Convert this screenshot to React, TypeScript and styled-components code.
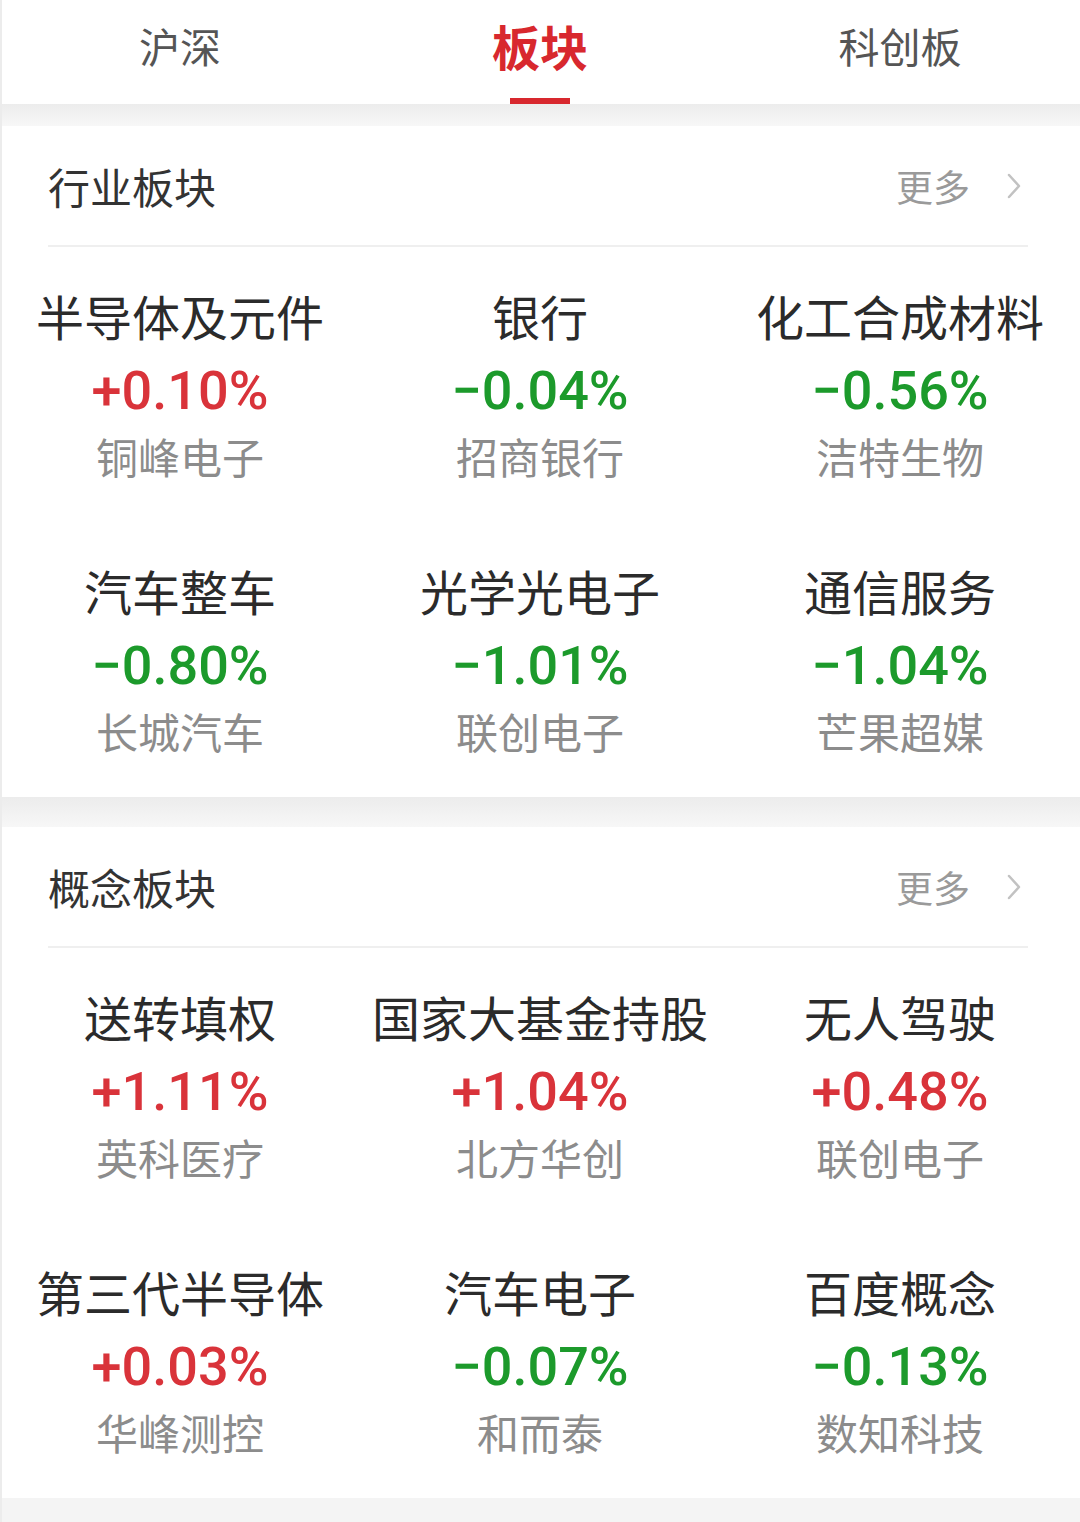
import styled, { createGlobalStyle } from 'styled-components';

const GlobalStyle = createGlobalStyle`
  body {
    margin: 0;
    background: #ffffff;
    font-family: 'Noto Sans CJK SC', 'Noto Sans', sans-serif;
  }
`;

const Page = styled.div`
  position: relative;
  width: 1080px;
  min-height: 1522px;
  background: #f4f4f4;
  &::before {
    content: '';
    position: absolute;
    left: 0;
    top: 0;
    bottom: 0;
    width: 2px;
    background: #ececec;
  }
`;

const TabBar = styled.div`
  display: grid;
  grid-template-columns: repeat(3, 1fr);
  height: 104px;
  background: #fff;
`;

const Tab = styled.div<{ $active?: boolean }>`
  display: flex;
  flex-direction: column;
  align-items: center;
  justify-content: flex-end;
  color: ${(p) => (p.$active ? '#d8282e' : '#555')};
  font-size: ${(p) => (p.$active ? '48px' : '41px')};
  font-weight: ${(p) => (p.$active ? 700 : 400)};
`;

const TabLabel = styled.span`
  line-height: 56px;
  margin-bottom: 25px;
`;

const Indicator = styled.div<{ $show?: boolean }>`
  width: 60px;
  height: 6px;
  background: ${(p) => (p.$show ? '#d8282e' : 'transparent')};
`;

const Band = styled.div<{ $h: number }>`
  height: ${(p) => p.$h}px;
  background: linear-gradient(#ececec, #f7f7f7);
`;

const Section = styled.section`
  background: #fff;
`;

const Header = styled.div`
  display: flex;
  align-items: center;
  justify-content: space-between;
  height: 119px;
  margin: 0 52px 0 48px;
  border-bottom: 2px solid #efefef;
`;

const HeaderTitle = styled.h2`
  margin: 0;
  font-size: 42px;
  font-weight: 400;
  color: #333;
`;

const More = styled.div`
  display: flex;
  align-items: center;
  gap: 36px;
  margin-right: 6px;
  font-size: 37px;
  color: #9a9a9a;
`;

const Grid = styled.div`
  display: grid;
  grid-template-columns: repeat(3, 360px);
  grid-auto-rows: 275px;
`;

const Cell = styled.div`
  display: flex;
  flex-direction: column;
  align-items: center;
  padding-top: 40px;
  white-space: nowrap;
`;

const Name = styled.div`
  font-size: 48px;
  line-height: 56px;
  color: #2b2b2b;
`;

const Pct = styled.div<{ $up: boolean }>`
  margin-top: 13px;
  font-family: Roboto, 'Liberation Sans', sans-serif;
  font-size: 54px;
  font-weight: 500;
  line-height: 70px;
  color: ${(p) => (p.$up ? '#d9333a' : '#1c9a2b')};
`;

const Stock = styled.div`
  margin-top: -2px;
  font-size: 42px;
  line-height: 64px;
  color: #8c8c8c;
`;

const Chevron = () => (
  <svg width="16" height="28" viewBox="0 0 16 28" fill="none">
    <polyline points="3,3 13,14 3,25" stroke="#c2c2c2" strokeWidth="2.5" strokeLinecap="round" strokeLinejoin="round" />
  </svg>
);

type Item = { name: string; pct: string; stock: string };

const industry: Item[] = [
  { name: '半导体及元件', pct: '+0.10%', stock: '铜峰电子' },
  { name: '银行', pct: '-0.04%', stock: '招商银行' },
  { name: '化工合成材料', pct: '-0.56%', stock: '洁特生物' },
  { name: '汽车整车', pct: '-0.80%', stock: '长城汽车' },
  { name: '光学光电子', pct: '-1.01%', stock: '联创电子' },
  { name: '通信服务', pct: '-1.04%', stock: '芒果超媒' },
];

const concept: Item[] = [
  { name: '送转填权', pct: '+1.11%', stock: '英科医疗' },
  { name: '国家大基金持股', pct: '+1.04%', stock: '北方华创' },
  { name: '无人驾驶', pct: '+0.48%', stock: '联创电子' },
  { name: '第三代半导体', pct: '+0.03%', stock: '华峰测控' },
  { name: '汽车电子', pct: '-0.07%', stock: '和而泰' },
  { name: '百度概念', pct: '-0.13%', stock: '数知科技' },
];

function Block({ title, items }: { title: string; items: Item[] }) {
  return (
    <Section>
      <Header>
        <HeaderTitle>{title}</HeaderTitle>
        <More>
          更多
          <Chevron />
        </More>
      </Header>
      <Grid>
        {items.map((it) => (
          <Cell key={it.name}>
            <Name>{it.name}</Name>
            <Pct $up={it.pct.startsWith('+')}>{it.pct.replace('-', '−')}</Pct>
            <Stock>{it.stock}</Stock>
          </Cell>
        ))}
      </Grid>
    </Section>
  );
}

export default function App() {
  return (
    <>
      <GlobalStyle />
      <Page>
        <TabBar>
          <Tab>
            <TabLabel>沪深</TabLabel>
            <Indicator />
          </Tab>
          <Tab $active>
            <TabLabel>板块</TabLabel>
            <Indicator $show />
          </Tab>
          <Tab>
            <TabLabel>科创板</TabLabel>
            <Indicator />
          </Tab>
        </TabBar>
        <Band $h={22} />
        <Block title="行业板块" items={industry} />
        <Band $h={30} />
        <Block title="概念板块" items={concept} />
      </Page>
    </>
  );
}
